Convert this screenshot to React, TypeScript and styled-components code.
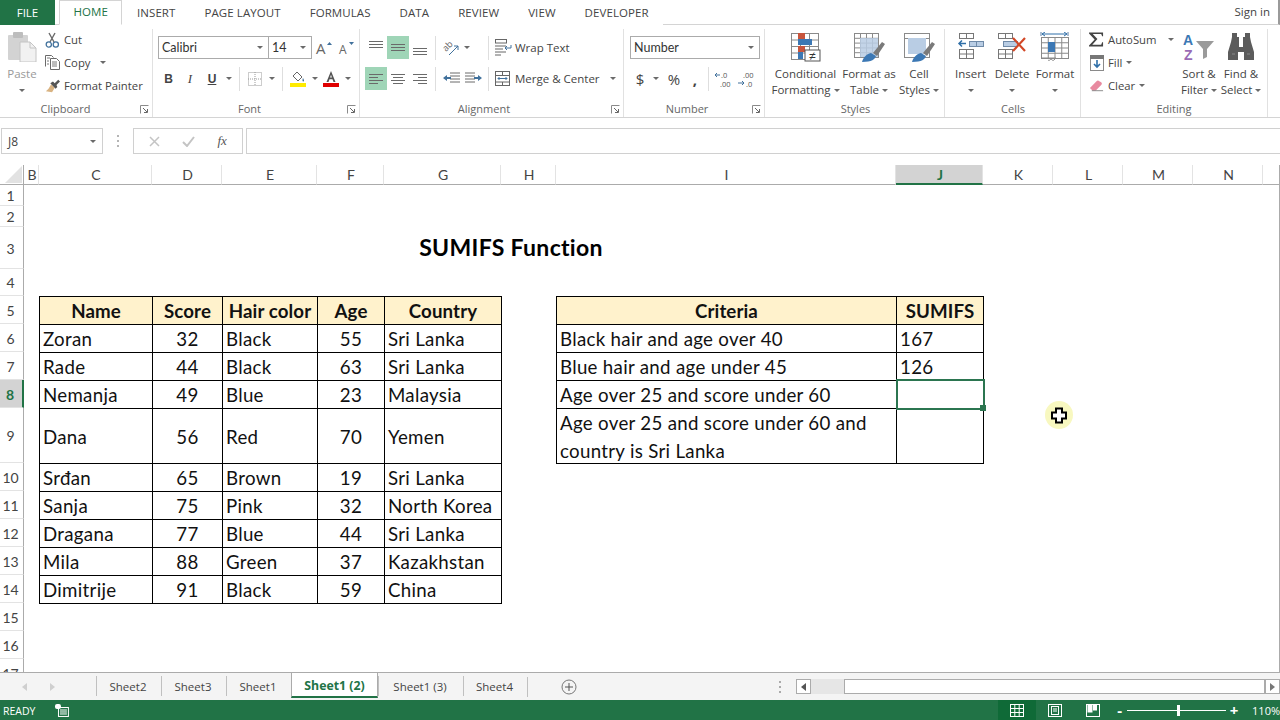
import React from 'react';
import styled, { createGlobalStyle } from 'styled-components';

const GREEN = '#217346';
const UI_FONT = '"Open Sans", "Noto Sans", sans-serif';
const CELL_FONT = 'Lato, "Liberation Sans", sans-serif';

const GlobalStyle = createGlobalStyle`
  html, body { margin: 0; padding: 0; background: #fff; }
  body { font-family: ${UI_FONT}; }
`;

const Window = styled.div`
  width: 1280px;
  height: 720px;
  display: flex;
  flex-direction: column;
  overflow: hidden;
  background: #fff;
  color: #444;
  font-size: 11.5px;
`;

/* ---------- tabs ---------- */
const TabBar = styled.div`
  height: 25px;
  flex: none;
  display: flex;
  box-sizing: border-box;
  border-bottom: 1px solid #d4d4d4;
  border-right: 2px solid #9a9a9a;
`;

const FileTab = styled.div`
  width: 55px;
  height: 25px;
  box-sizing: border-box;
  padding-bottom: 1px;
  margin-right: 4px;
  background: ${GREEN};
  color: #fff;
  font-size: 11.5px;
  display: flex;
  align-items: center;
  justify-content: center;
`;

const RibbonTab = styled.div<{ $active?: boolean }>`
  height: 25px;
  box-sizing: border-box;
  padding: 0 13.5px 2px;
  display: flex;
  align-items: center;
  font-size: 11.5px;
  letter-spacing: 0.08px;
  color: ${p => (p.$active ? GREEN : '#444')};
  background: #fff;
  border: ${p => (p.$active ? '1px solid #d4d4d4' : '1px solid transparent')};
  border-bottom: ${p => (p.$active ? '1px solid #fff' : 'none')};
`;

const SignIn = styled.div`
  margin-left: auto;
  padding: 0 8px 2px 0;
  font-size: 11.5px;
  display: flex;
  align-items: center;
`;

/* ---------- ribbon ---------- */
const Ribbon = styled.div`
  height: 93px;
  flex: none;
  display: flex;
  box-sizing: border-box;
  border-bottom: 1px solid #d4d4d4;
`;

const Group = styled.div<{ $w: number; $pad?: number }>`
  width: ${p => p.$w}px;
  flex: none;
  box-sizing: border-box;
  position: relative;
  display: flex;
  flex-direction: column;
  padding-left: ${p => p.$pad ?? 5}px;
  margin-top: 4px;
  border-right: 1px solid #e1e1e1;
`;

const GroupBody = styled.div`
  flex: 1;
  display: flex;
  min-height: 0;
`;

const GroupLabel = styled.div<{ $pr?: number }>`
  height: 16px;
  line-height: 16px;
  text-align: center;
  color: #666;
  font-size: 11px;
  padding-right: ${p => p.$pr ?? 0}px;
`;

const Launcher = styled.svg`
  position: absolute;
  right: 3px;
  bottom: 3px;
  width: 9px;
  height: 9px;
`;

const Rows = styled.div`
  padding-top: 7px;
  display: flex;
  flex-direction: column;
  gap: 8px;
`;

const Row = styled.div`
  height: 23px;
  display: flex;
  align-items: center;
`;

const Sep = styled.div`
  width: 1px;
  height: 24px;
  margin: 0 4px;
  background: #dedede;
`;

const IconCell = styled.div<{ $w: number; $on?: boolean }>`
  width: ${p => p.$w}px;
  height: 23px;
  flex: none;
  display: flex;
  align-items: center;
  justify-content: center;
  background: ${p => (p.$on ? '#9fd5b7' : 'transparent')};
`;

const Caret = styled.span`
  display: inline-block;
  width: 0;
  height: 0;
  border-left: 3px solid transparent;
  border-right: 3px solid transparent;
  border-top: 3px solid #6a6a6a;
  vertical-align: middle;
`;

const Combo = styled.div<{ $w: number; $joined?: boolean }>`
  width: ${p => p.$w}px;
  height: 23px;
  flex: none;
  box-sizing: border-box;
  border: 1px solid #ababab;
  ${p => (p.$joined ? 'border-left: none;' : '')}
  padding: 0 5px 0 3px;
  background: #fff;
  display: flex;
  align-items: center;
  justify-content: space-between;
  font-family: ${CELL_FONT};
  font-size: 12.5px;
  color: #333;
`;

const SmallColumn = styled.div<{ $w?: number; $left?: number }>`
  ${p => (p.$w ? `width: ${p.$w}px;` : '')}
  margin-left: ${p => p.$left ?? 0}px;
  margin-top: -1px;
  display: flex;
  flex-direction: column;
`;

const SmallAction = styled.div`
  height: 23px;
  display: flex;
  align-items: center;
  gap: 4px;
  white-space: nowrap;
  font-size: 11.3px;
`;

const IconSlot = styled.div`
  width: 15px;
  flex: none;
  display: flex;
  justify-content: center;
`;

const TextButton = styled.div`
  display: flex;
  align-items: center;
  gap: 3px;
  margin-left: 2px;
  white-space: nowrap;
  font-size: 11.5px;
`;

const LargeButton = styled.div<{ $w: number; $muted?: boolean }>`
  width: ${p => p.$w}px;
  flex: none;
  padding-top: 3px;
  display: flex;
  flex-direction: column;
  align-items: center;
  color: ${p => (p.$muted ? '#9a9a9a' : '#444')};
`;

const LargeIcon = styled.div`
  height: 30px;
  margin-bottom: 4px;
  display: flex;
  align-items: flex-start;
  justify-content: center;
`;

const LargeLine = styled.div`
  height: 16px;
  line-height: 16px;
  white-space: nowrap;
  font-size: 11.5px;
  display: flex;
  align-items: center;
  gap: 3px;
`;

const BoldGlyph = styled.span<{ $underline?: boolean }>`
  font-family: "Liberation Sans", sans-serif;
  font-size: 12px;
  font-weight: 700;
  text-decoration: ${p => (p.$underline ? 'underline' : 'none')};
`;

const ItalicGlyph = styled.span`
  font-family: "Liberation Serif", serif;
  font-style: italic;
  font-size: 13px;
`;

const NumberGlyph = styled.span`
  font-size: 15px;
`;

/* ---------- formula bar ---------- */
const FormulaBar = styled.div`
  height: 26px;
  flex: none;
  margin-top: 10px;
  display: flex;
  align-items: stretch;
`;

const NameBox = styled.div`
  width: 102px;
  margin-left: 1px;
  box-sizing: border-box;
  border: 1px solid #d0d0d0;
  padding: 0 6px;
  display: flex;
  align-items: center;
  justify-content: space-between;
  font-size: 12px;
`;

const Grip = styled.div`
  width: 30px;
  display: flex;
  align-items: center;
  justify-content: center;
`;

const FormulaButtons = styled.div`
  width: 110px;
  box-sizing: border-box;
  border: 1px solid #d0d0d0;
  margin-right: 3px;
  display: flex;
  align-items: center;
  justify-content: space-around;
  padding: 0 4px;
`;

const FxLabel = styled.span`
  font-family: "Liberation Serif", serif;
  font-style: italic;
  font-size: 13px;
  color: #555;
`;

const FormulaInput = styled.div`
  flex: 1;
  box-sizing: border-box;
  border: 1px solid #d0d0d0;
  border-right: none;
`;

/* ---------- sheet ---------- */
const SheetArea = styled.div`
  flex: 1;
  min-height: 0;
  margin-top: 11px;
  overflow: hidden;
  position: relative;
  border-right: 1px solid #ababab;
`;

const SheetGrid = styled.div`
  display: grid;
  grid-template-columns: 24px 15px 113px 70px 95px 67px 117px 55px 340px 87px 70px 70px 70px 70px 17px;
  grid-template-rows: 20px 21px 21px 42px 27px 28px 28px 28px 28px 55px 28px 28px 28px 28px 28px 28px 28px 28px;
`;

const Corner = styled.div`
  grid-column: 1;
  grid-row: 1;
  border-right: 1px solid #ababab;
  border-bottom: 1px solid #ababab;
  display: flex;
  align-items: flex-end;
  justify-content: flex-end;
  padding: 0 1px 1px 0;
`;

const ColHead = styled.div<{ $col: number; $on?: boolean }>`
  grid-column: ${p => p.$col};
  grid-row: 1;
  box-sizing: border-box;
  padding-left: 2px;
  display: flex;
  align-items: center;
  justify-content: center;
  font-family: ${CELL_FONT};
  font-size: 14px;
  color: ${p => (p.$on ? GREEN : '#444')};
  font-weight: ${p => (p.$on ? 700 : 400)};
  background: ${p => (p.$on ? '#d3d3d3' : '#fff')};
  border-right: 1px solid #e3e3e3;
  border-bottom: ${p => (p.$on ? `2px solid ${GREEN}` : '1px solid #ababab')};
`;

const RowHead = styled.div<{ $row: number; $on?: boolean }>`
  grid-column: 1;
  grid-row: ${p => p.$row};
  box-sizing: border-box;
  padding: 1px 2px 0 0;
  display: flex;
  align-items: center;
  justify-content: center;
  font-family: ${CELL_FONT};
  font-size: 14px;
  color: ${p => (p.$on ? GREEN : '#444')};
  font-weight: ${p => (p.$on ? 700 : 400)};
  background: ${p => (p.$on ? '#d3d3d3' : '#fff')};
  border-bottom: 1px solid #e3e3e3;
  border-right: ${p => (p.$on ? `2px solid ${GREEN}` : '1px solid #ababab')};
`;

const Title = styled.div`
  grid-column: 3 / 11;
  grid-row: 4;
  padding-bottom: 2px;
  display: flex;
  align-items: center;
  justify-content: center;
  font-family: ${CELL_FONT};
  font-weight: 700;
  font-size: 23px;
  letter-spacing: 0.3px;
  color: #000;
`;

const Cell = styled.div<{ $col: number; $row: number; $head?: boolean; $center?: boolean }>`
  grid-column: ${p => p.$col};
  grid-row: ${p => p.$row};
  position: relative;
  margin: 0 -1px -1px 0;
  box-sizing: border-box;
  border: 1px solid #000;
  padding: 1px 3px 0;
  display: flex;
  align-items: center;
  justify-content: ${p => (p.$center ? 'center' : 'flex-start')};
  font-family: ${CELL_FONT};
  font-size: 18.7px;
  line-height: 28px;
  letter-spacing: ${p => (p.$head ? '0.1px' : '0.3px')};
  font-weight: ${p => (p.$head ? 700 : 400)};
  background: ${p => (p.$head ? '#fff2cc' : '#fff')};
  color: #111;
  white-space: pre-wrap;
`;

const Selection = styled.div`
  position: absolute;
  z-index: 1;
  inset: -2px -2px -2px -1px;
  border: 2px solid #2b7550;
`;

const FillHandle = styled.div`
  position: absolute;
  right: -3px;
  bottom: -3px;
  width: 6px;
  height: 6px;
  background: #2b7550;
`;

const MouseCursor = styled.svg`
  position: absolute;
  left: 1044px;
  top: 235px;
  width: 30px;
  height: 30px;
`;

/* ---------- sheet tabs ---------- */
const TabStrip = styled.div`
  height: 28px;
  flex: none;
  box-sizing: border-box;
  border-top: 1px solid #ababab;
  background: #f4f4f4;
  display: flex;
  align-items: center;
`;

const NavArrows = styled.div`
  width: 96px;
  flex: none;
  padding-left: 22px;
  box-sizing: border-box;
  display: flex;
  gap: 23px;
`;

const SheetTab = styled.div<{ $w: number; $active?: boolean }>`
  width: ${p => p.$w}px;
  flex: none;
  box-sizing: border-box;
  align-self: stretch;
  margin-top: ${p => (p.$active ? '0' : '3px')};
  margin-bottom: ${p => (p.$active ? '2px' : '4px')};
  padding: ${p => (p.$active ? '1px 0 0' : '0 2px 0 0')};
  display: flex;
  align-items: center;
  justify-content: center;
  font-size: ${p => (p.$active ? '12.3px' : '11.5px')};
  color: ${p => (p.$active ? GREEN : '#444')};
  font-weight: ${p => (p.$active ? 700 : 400)};
  background: ${p => (p.$active ? '#fff' : 'transparent')};
  border-left: 1px solid ${p => (p.$active ? '#ababab' : '#c0c0c0')};
  border-right: ${p => (p.$active ? '1px solid #ababab' : 'none')};
  border-bottom: ${p => (p.$active ? `2px solid ${GREEN}` : 'none')};
`;

const TabsEnd = styled.div`
  width: 1px;
  height: 20px;
  background: #c0c0c0;
`;

const AddSheet = styled.svg`
  width: 16px;
  height: 16px;
  margin-left: 33px;
  flex: none;
`;

const HScrollGrip = styled.svg`
  width: 4px;
  height: 12px;
  margin-left: 201px;
  flex: none;
`;

const ScrollButton = styled.div<{ $left?: number }>`
  width: 15px;
  height: 15px;
  flex: none;
  margin-left: ${p => p.$left ?? 0}px;
  box-sizing: border-box;
  border: 1px solid #ababab;
  background: #fff;
  display: flex;
  align-items: center;
  justify-content: center;
`;

const ScrollThumb = styled.div`
  width: 33px;
  height: 15px;
  flex: none;
  background: #e6e6e6;
`;

const ScrollTrack = styled.div`
  flex: 1;
  height: 15px;
  box-sizing: border-box;
  border: 1px solid #ababab;
  background: #fff;
`;

/* ---------- status bar ---------- */
const StatusBar = styled.div`
  height: 20px;
  flex: none;
  background: ${GREEN};
  color: #fff;
  display: flex;
  align-items: center;
  font-size: 10.5px;
`;

const Ready = styled.div`
  box-sizing: border-box;
  padding: 1px 0 0 3px;
  width: 55px;
`;

const ViewButtons = styled.div`
  margin-left: 929px;
  display: flex;
`;

const ViewButton = styled.div<{ $on?: boolean }>`
  width: 38px;
  height: 20px;
  flex: none;
  display: flex;
  align-items: center;
  justify-content: center;
  background: ${p => (p.$on ? '#0f6a37' : 'transparent')};
`;

const ZoomSlider = styled.div`
  width: 100px;
  height: 1px;
  background: #fff;
  position: relative;
  margin: 0 3px 0 2px;
`;

const ZoomKnob = styled.div`
  position: absolute;
  left: 50px;
  top: -5px;
  width: 3px;
  height: 11px;
  background: #fff;
`;

const ZoomSign = styled.div<{ $left?: number }>`
  width: 10px;
  flex: none;
  margin-left: ${p => p.$left ?? 0}px;
  font-size: 15px;
  font-weight: 700;
  line-height: 20px;
  text-align: center;
`;

const ZoomValue = styled.span`
  margin-left: 13px;
  white-space: nowrap;
  font-size: 11px;
`;

/* ---------- icons ---------- */
const LauncherIcon = () => (
  <Launcher viewBox="0 0 9 9">
    <path d="M.5 8.5v-8h8" fill="none" stroke="#8a8a8a" />
    <path d="M3 3l4 4M7.5 4v3.5H4" fill="none" stroke="#666" />
  </Launcher>
);

const AlignLines = ({ lines, y = 0 }: { lines: [number, number][]; y?: number }) => (
  <svg width="16" height="14" viewBox="0 0 16 14">
    {lines.map(([x, w], i) => (
      <rect key={i} x={x} y={y + i * 3} width={w} height="1" fill="#6a6a6a" />
    ))}
  </svg>
);

const PasteIcon = () => (
  <svg width="30" height="30" viewBox="0 0 30 30">
    <rect x="1" y="3" width="20" height="25" rx="1" fill="#d3d3d3" />
    <rect x="6" y="0" width="10" height="6" rx="1" fill="#bdbdbd" />
    <path d="M13 10h10l6 6v14H13z" fill="#f1f1f1" stroke="#c4c4c4" />
    <path d="M23 10v6h6" fill="none" stroke="#c4c4c4" />
  </svg>
);

const CutIcon = () => (
  <svg width="15" height="16" viewBox="0 0 15 16">
    <path d="M10 1L5 10M4 1l5 9" stroke="#6a6a6a" strokeWidth="1.4" fill="none" />
    <circle cx="3.8" cy="12.5" r="2.6" fill="none" stroke="#41719c" strokeWidth="1.3" />
    <circle cx="10.8" cy="12.5" r="2.6" fill="none" stroke="#41719c" strokeWidth="1.3" />
  </svg>
);

const CopyIcon = () => (
  <svg width="15" height="15" viewBox="0 0 15 15" fill="none" stroke="#6a6a6a">
    <path d="M.5 11.5v-11h6l2 2" />
    <path d="M5.5 3.5h6l3 3v8h-9z" fill="#fff" />
    <path d="M2 3h3M2 6h2M2 9h2M7 7h5M7 9h5M7 11h5" stroke="#7a7a7a" />
  </svg>
);

const PainterIcon = () => (
  <svg width="17" height="16" viewBox="0 0 17 16">
    <path d="M7 6l4 4-3 5-7-1 3-3z" fill="#d9b382" />
    <path d="M6 5l3-2 2 2 4-4 2 2-4 4 1 2-2 2z" fill="#555" />
  </svg>
);

const BordersIcon = () => (
  <svg width="14" height="14" viewBox="0 0 14 14" fill="none" stroke="#9a9a9a" strokeDasharray="1 1">
    <rect x=".5" y=".5" width="13" height="13" />
    <path d="M7 0v14M0 7h14" />
  </svg>
);

const FillIcon = () => (
  <svg width="16" height="16" viewBox="0 0 16 16">
    <path d="M7 1l5 5-4 4-5-5z" fill="#fff" stroke="#666" />
    <path d="M13 7c1 2 1.500 3 .5 3.500S12 9 13 7z" fill="#41719c" />
    <rect x="0" y="12" width="16" height="4" fill="#ffeb00" />
  </svg>
);

const FontColorIcon = () => (
  <svg width="16" height="16" viewBox="0 0 16 16">
    <path d="M8 0l4.500 11h-2l-1-2.700h-3L5.500 11h-2zM7.100 6.500h1.800L8 3.800z" fill="#555" />
    <rect x="0" y="12" width="16" height="4" fill="#e00000" />
  </svg>
);

const GrowA = ({ small }: { small?: boolean }) => (
  <svg width="18" height="20" viewBox="0 0 18 20">
    <text x="1" y="16" fontFamily="Open Sans, sans-serif" fontSize={small ? 12 : 15} fill="#666">A</text>
    <path d={small ? 'M11 4h5l-2.500 3z' : 'M12 7h5l-2.500-3z'} fill="#41719c" />
  </svg>
);

const OrientIcon = () => (
  <svg width="17" height="16" viewBox="0 0 17 16" fill="none">
    <text x="0" y="0" transform="translate(3 12) rotate(-45)" fontFamily="Open Sans, sans-serif" fontSize="9" fill="#666">ab</text>
    <path d="M6 15l9-9M15 6h-4M15 6v4" stroke="#41719c" />
  </svg>
);

const IndentIcon = ({ flip }: { flip?: boolean }) => (
  <svg width="17" height="13" viewBox="0 0 17 13" style={flip ? { transform: 'scaleX(-1)' } : undefined}>
    <path d="M7 1h10M7 4h10M7 7h10M7 10h10" stroke="#6a6a6a" />
    <path d="M0 6l4-3v2h4v2H4v2z" fill="#41719c" />
  </svg>
);

const WrapIcon = () => (
  <svg width="17" height="17" viewBox="0 0 17 17" fill="none" stroke="#666">
    <rect x=".5" y=".5" width="11" height="3.500" />
    <path d="M0 7h11M0 10h8M0 13h11M0 16h6" />
    <path d="M16 6v3h-6" stroke="#41719c" />
    <path d="M12 7l-2 2 2 2" stroke="#41719c" />
  </svg>
);

const MergeIcon = () => (
  <svg width="15" height="15" viewBox="0 0 15 15" fill="none" stroke="#666">
    <rect x=".5" y=".5" width="14" height="14" />
    <path d="M0 4.500h15M0 11h15M7.500 0v4M7.500 11v4" />
    <path d="M3 7.500h9M4.500 6L3 7.500 4.500 9M10.500 6L12 7.500 10.500 9" stroke="#41719c" />
  </svg>
);

const DecimalIcon = ({ more }: { more?: boolean }) => (
  <svg width="20" height="20" viewBox="0 0 20 20">
    <text x="7" y="9" fontFamily="Open Sans, sans-serif" fontSize="7.500" fill="#555">{more ? '.00' : '.0'}</text>
    <text x={more ? 10 : 6} y="18" fontFamily="Open Sans, sans-serif" fontSize="7.500" fill="#555">{more ? '.0' : '.00'}</text>
    <path d={more ? 'M2 14h6M6 12l2 2-2 2' : 'M1 6h5M3 4L1 6l2 2'} stroke="#41719c" fill="none" />
  </svg>
);

const Grid4 = ({ x, y, w, h, cols, rows }: { x: number; y: number; w: number; h: number; cols: number; rows: number }) => (
  <g stroke="#8a8a8a" fill="none">
    <rect x={x + 0.5} y={y + 0.5} width={w} height={h} />
    {Array.from({ length: cols - 1 }, (_, i) => (
      <path key={i} d={`M${x + 0.5 + ((i + 1) * w) / cols} ${y}v${h}`} />
    ))}
    {Array.from({ length: rows - 1 }, (_, i) => (
      <path key={i} d={`M${x} ${y + 0.5 + ((i + 1) * h) / rows}h${w}`} />
    ))}
  </g>
);

const ConditionalIcon = () => (
  <svg width="32" height="30" viewBox="0 0 32 30">
    <Grid4 x={1} y={1} w={27} h={26} cols={3} rows={4} />
    <rect x="8" y="1" width="7" height="6" fill="#c8553d" />
    <rect x="8" y="7" width="14" height="6" fill="#3c78b4" />
    <rect x="8" y="14" width="7" height="6" fill="#c8553d" />
    <rect x="8" y="20" width="5" height="7" fill="#3c78b4" />
    <rect x="15" y="18" width="15" height="11" fill="#fff" stroke="#555" />
    <text x="22.500" y="27.500" textAnchor="middle" fontFamily="Liberation Sans, sans-serif" fontSize="12" fill="#333">≠</text>
  </svg>
);

const BrushStroke = () => (
  <g>
    <path d="M20 21L29 10l3 2-8 12z" fill="#7a7a7a" />
    <path d="M9 30c1-4 4-8 9-9l5 3c-1 3-4 6-14 6z" fill="#3c78b4" />
  </g>
);

const FormatTableIcon = () => (
  <svg width="32" height="30" viewBox="0 0 32 30">
    <Grid4 x={1} y={1} w={24} h={24} cols={4} rows={5} />
    <rect x="7" y="6" width="18" height="19" fill="#b9cde4" opacity=".85" />
    <BrushStroke />
  </svg>
);

const CellStylesIcon = () => (
  <svg width="32" height="30" viewBox="0 0 32 30">
    <rect x="1.500" y="1.500" width="25" height="24" fill="none" stroke="#8a8a8a" />
    <path d="M1 6.500h26" stroke="#8a8a8a" />
    <rect x="5" y="6" width="18" height="16" fill="#b9cde4" />
    <BrushStroke />
  </svg>
);

const InsertIcon = () => (
  <svg width="28" height="30" viewBox="0 0 28 30" fill="none" stroke="#777">
    <rect x="2.500" y="1.500" width="14" height="5" />
    <path d="M9.500 1v5" />
    <rect x="2.500" y="17.500" width="14" height="9" />
    <path d="M9.500 17v9M2 22h15" />
    <path d="M2 11.500h7M5 8.500l-3 3 3 3" stroke="#2f6fa8" strokeWidth="1.500" />
    <rect x="12.500" y="9.500" width="14" height="5" fill="#b9cde4" stroke="#6f8aa8" />
    <path d="M19.500 9v5" stroke="#6f8aa8" />
  </svg>
);

const DeleteIcon = () => (
  <svg width="32" height="30" viewBox="0 0 32 30" fill="none" stroke="#777">
    <rect x="2.500" y="1.500" width="14" height="5" />
    <path d="M9.500 1v5" />
    <rect x="2.500" y="17.500" width="14" height="9" />
    <path d="M9.500 17v9M2 22h15" />
    <rect x="7.500" y="9.500" width="14" height="5" fill="#b9cde4" stroke="#6f8aa8" />
    <path d="M17 6l12 13M29 6L17 19" stroke="#d24726" strokeWidth="2.200" />
  </svg>
);

const FormatCellIcon = () => (
  <svg width="30" height="30" viewBox="0 0 30 30" fill="none">
    <path d="M1 0v4M28 0v4" stroke="#5a7fa6" />
    <path d="M2 2h25M5 0L2 2l3 2M24 0l3 2-3 2" stroke="#2f6fa8" />
    <Grid4 x={1} y={5} w={27} h={21} cols={4} rows={4} />
    <rect x="8" y="10" width="7" height="10" fill="#3c78b4" />
    <path d="M1 26h15l-2 2c-1 1-2 0-3-1-1 1-2 2-3 1" stroke="#8a8a8a" />
  </svg>
);

const SigmaIcon = () => (
  <svg width="16" height="15" viewBox="0 0 16 15">
    <path d="M0 0h15v4h-1l-1-2.500H4L9 7l-5.500 6H13l1-2.500h1V15H0v-1l6-6.500L0 1z" fill="#444" />
  </svg>
);

const FillDownIcon = () => (
  <svg width="14" height="16" viewBox="0 0 14 16">
    <rect x=".5" y=".5" width="13" height="15" fill="#fff" stroke="#8a8a8a" />
    <rect x="0" y="0" width="14" height="4" fill="#777" />
    <path d="M7 5v7M4 9l3 3 3-3" stroke="#2f6fa8" strokeWidth="1.600" fill="none" />
  </svg>
);

const EraserIcon = () => (
  <svg width="16" height="14" viewBox="0 0 16 14">
    <path d="M1 9l7-7c1-1 2-1 3 0l2 1c1 1 1 2 0 3l-6 6H4z" fill="#e88aa0" />
    <path d="M3 12h12" stroke="#888" />
  </svg>
);

const SortIcon = () => (
  <svg width="32" height="30" viewBox="0 0 32 30">
    <text x="0" y="13" fontFamily="Liberation Sans, sans-serif" fontWeight="700" fontSize="14" fill="#3c78b4">A</text>
    <text x="1" y="28" fontFamily="Liberation Sans, sans-serif" fontWeight="700" fontSize="14" fill="#9a6bb5">Z</text>
    <path d="M13 9h18l-7 8v8l-4 2V17z" fill="#9a9a9a" />
  </svg>
);

const BinocularsIcon = () => (
  <svg width="28" height="30" viewBox="0 0 28 30">
    <path d="M5 1h5v4h2v10h4V5h2V1h5v4l1 5 3 10v8H17v-8h-6v8H1v-8l3-10 1-5z" fill="#5c5c5c" />
    <path d="M5 22h3M20 22h3" stroke="#888" />
  </svg>
);

const CrossIcon = () => (
  <svg width="11" height="11" viewBox="0 0 11 11"><path d="M1 1l9 9M10 1l-9 9" stroke="#c4c4c4" strokeWidth="1.500" /></svg>
);

const CheckIcon = () => (
  <svg width="13" height="11" viewBox="0 0 13 11"><path d="M1 6l4 4 7-9" stroke="#c4c4c4" strokeWidth="2" fill="none" /></svg>
);

const Arrow = ({ left, color }: { left?: boolean; color: string }) => (
  <svg width="5" height="8" viewBox="0 0 5 8"><path d={left ? 'M5 0v8L0 4z' : 'M0 0v8l5-4z'} fill={color} /></svg>
);

const GripDots = ({ color }: { color: string }) => (
  <svg width="4" height="12" viewBox="0 0 4 12" fill={color}>
    <rect x="1" y="0" width="2" height="2" />
    <rect x="1" y="5" width="2" height="2" />
    <rect x="1" y="10" width="2" height="2" />
  </svg>
);

/* ---------- data ---------- */
const COLUMNS = ['B', 'C', 'D', 'E', 'F', 'G', 'H', 'I', 'J', 'K', 'L', 'M', 'N'];

const ROW_LABELS = Array.from({ length: 17 }, (_, i) => i + 1);

const PEOPLE: [string, number, string, number, string][] = [
  ['Zoran', 32, 'Black', 55, 'Sri Lanka'],
  ['Rade', 44, 'Black', 63, 'Sri Lanka'],
  ['Nemanja', 49, 'Blue', 23, 'Malaysia'],
  ['Dana', 56, 'Red', 70, 'Yemen'],
  ['Srđan', 65, 'Brown', 19, 'Sri Lanka'],
  ['Sanja', 75, 'Pink', 32, 'North Korea'],
  ['Dragana', 77, 'Blue', 44, 'Sri Lanka'],
  ['Mila', 88, 'Green', 37, 'Kazakhstan'],
  ['Dimitrije', 91, 'Black', 59, 'China'],
];

const HEADERS = ['Name', 'Score', 'Hair color', 'Age', 'Country'];

const CRITERIA: [string, string][] = [
  ['Black hair and age over 40', '167'],
  ['Blue hair and age under 45', '126'],
  ['Age over 25 and score under 60', ''],
  ['Age over 25 and score under 60 and\ncountry is Sri Lanka', ''],
];

const SHEETS: { name: string; w: number; active?: boolean }[] = [
  { name: 'Sheet2', w: 65 },
  { name: 'Sheet3', w: 65 },
  { name: 'Sheet1', w: 65 },
  { name: 'Sheet1 (2)', w: 87, active: true },
  { name: 'Sheet1 (3)', w: 85 },
  { name: 'Sheet4', w: 64 },
];

const RIBBON_TABS = ['INSERT', 'PAGE LAYOUT', 'FORMULAS', 'DATA', 'REVIEW', 'VIEW', 'DEVELOPER'];

const App: React.FC = () => (
  <Window>
    <GlobalStyle />
    <TabBar>
      <FileTab>FILE</FileTab>
      <RibbonTab $active>HOME</RibbonTab>
      {RIBBON_TABS.map(t => (
        <RibbonTab key={t}>{t}</RibbonTab>
      ))}
      <SignIn>Sign in</SignIn>
    </TabBar>

    <Ribbon>
      <Group $w={153} $pad={3}>
        <GroupBody>
          <LargeButton $w={38} $muted>
            <LargeIcon><PasteIcon /></LargeIcon>
            <LargeLine>Paste</LargeLine>
            <LargeLine><Caret /></LargeLine>
          </LargeButton>
          <SmallColumn $left={4}>
            <SmallAction><IconSlot><CutIcon /></IconSlot>Cut</SmallAction>
            <SmallAction><IconSlot><CopyIcon /></IconSlot>Copy<Caret style={{ marginLeft: 6 }} /></SmallAction>
            <SmallAction><IconSlot><PainterIcon /></IconSlot>Format Painter</SmallAction>
          </SmallColumn>
        </GroupBody>
        <GroupLabel $pr={24}>Clipboard</GroupLabel>
        <LauncherIcon />
      </Group>

      <Group $w={207}>
        <GroupBody>
          <Rows>
            <Row>
              <Combo $w={111}>Calibri<Caret /></Combo>
              <Combo $w={43} $joined>14<Caret /></Combo>
              <IconCell $w={23}><GrowA /></IconCell>
              <IconCell $w={23}><GrowA small /></IconCell>
            </Row>
            <Row>
              <IconCell $w={21}><BoldGlyph>B</BoldGlyph></IconCell>
              <IconCell $w={22}><ItalicGlyph>I</ItalicGlyph></IconCell>
              <IconCell $w={22}><BoldGlyph $underline>U</BoldGlyph></IconCell>
              <IconCell $w={12}><Caret /></IconCell>
              <Sep />
              <IconCell $w={22}><BordersIcon /></IconCell>
              <IconCell $w={12}><Caret /></IconCell>
              <Sep />
              <IconCell $w={22}><FillIcon /></IconCell>
              <IconCell $w={11}><Caret /></IconCell>
              <IconCell $w={22}><FontColorIcon /></IconCell>
              <IconCell $w={11}><Caret /></IconCell>
            </Row>
          </Rows>
        </GroupBody>
        <GroupLabel $pr={18}>Font</GroupLabel>
        <LauncherIcon />
      </Group>

      <Group $w={264}>
        <GroupBody>
          <Rows>
            <Row>
              <IconCell $w={22}><AlignLines lines={[[1, 14], [1, 14], [1, 14]]} y={0} /></IconCell>
              <IconCell $w={22} $on><AlignLines lines={[[1, 14], [1, 14], [1, 14]]} y={3} /></IconCell>
              <IconCell $w={22}><AlignLines lines={[[1, 14], [1, 14], [1, 14]]} y={7} /></IconCell>
              <Sep />
              <IconCell $w={22}><OrientIcon /></IconCell>
              <IconCell $w={10}><Caret /></IconCell>
              <IconCell $w={12} />
              <Sep />
              <TextButton><WrapIcon />Wrap Text</TextButton>
            </Row>
            <Row>
              <IconCell $w={22} $on><AlignLines lines={[[1, 14], [1, 9], [1, 14], [1, 9]]} y={2} /></IconCell>
              <IconCell $w={22}><AlignLines lines={[[1, 14], [3, 10], [1, 14], [3, 10]]} y={2} /></IconCell>
              <IconCell $w={22}><AlignLines lines={[[1, 14], [6, 9], [1, 14], [6, 9]]} y={2} /></IconCell>
              <Sep />
              <IconCell $w={22}><IndentIcon /></IconCell>
              <IconCell $w={22}><IndentIcon flip /></IconCell>
              <Sep />
              <TextButton>
                <MergeIcon />
                <span style={{ marginLeft: 2 }}>Merge &amp; Center</span>
                <Caret style={{ marginLeft: 7 }} />
              </TextButton>
            </Row>
          </Rows>
        </GroupBody>
        <GroupLabel $pr={20}>Alignment</GroupLabel>
        <LauncherIcon />
      </Group>

      <Group $w={141} $pad={6}>
        <GroupBody>
          <Rows>
            <Row>
              <Combo $w={130}>Number<Caret /></Combo>
            </Row>
            <Row>
              <IconCell $w={20}><NumberGlyph>$</NumberGlyph></IconCell>
              <IconCell $w={12}><Caret /></IconCell>
              <IconCell $w={24}><NumberGlyph>%</NumberGlyph></IconCell>
              <IconCell $w={18}><NumberGlyph><b>,</b></NumberGlyph></IconCell>
              <Sep />
              <IconCell $w={22}><DecimalIcon /></IconCell>
              <IconCell $w={22}><DecimalIcon more /></IconCell>
            </Row>
          </Rows>
        </GroupBody>
        <GroupLabel $pr={20}>Number</GroupLabel>
        <LauncherIcon />
      </Group>

      <Group $w={180} $pad={6}>
        <GroupBody>
          <LargeButton $w={69}>
            <LargeIcon><ConditionalIcon /></LargeIcon>
            <LargeLine>Conditional</LargeLine>
            <LargeLine>Formatting<Caret /></LargeLine>
          </LargeButton>
          <LargeButton $w={58}>
            <LargeIcon><FormatTableIcon /></LargeIcon>
            <LargeLine>Format as</LargeLine>
            <LargeLine>Table<Caret /></LargeLine>
          </LargeButton>
          <LargeButton $w={42}>
            <LargeIcon><CellStylesIcon /></LargeIcon>
            <LargeLine>Cell</LargeLine>
            <LargeLine>Styles<Caret /></LargeLine>
          </LargeButton>
        </GroupBody>
        <GroupLabel $pr={4}>Styles</GroupLabel>
      </Group>

      <Group $w={136}>
        <GroupBody>
          <LargeButton $w={41}>
            <LargeIcon><InsertIcon /></LargeIcon>
            <LargeLine>Insert</LargeLine>
            <LargeLine><Caret /></LargeLine>
          </LargeButton>
          <LargeButton $w={42}>
            <LargeIcon><DeleteIcon /></LargeIcon>
            <LargeLine>Delete</LargeLine>
            <LargeLine><Caret /></LargeLine>
          </LargeButton>
          <LargeButton $w={44}>
            <LargeIcon><FormatCellIcon /></LargeIcon>
            <LargeLine>Format</LargeLine>
            <LargeLine><Caret /></LargeLine>
          </LargeButton>
        </GroupBody>
        <GroupLabel $pr={4}>Cells</GroupLabel>
      </Group>

      <Group $w={187} $pad={8}>
        <GroupBody>
          <SmallColumn $w={87}>
            <SmallAction><IconSlot><SigmaIcon /></IconSlot>AutoSum<Caret style={{ marginLeft: 8 }} /></SmallAction>
            <SmallAction><IconSlot><FillDownIcon /></IconSlot>Fill<Caret /></SmallAction>
            <SmallAction><IconSlot><EraserIcon /></IconSlot>Clear<Caret /></SmallAction>
          </SmallColumn>
          <LargeButton $w={46}>
            <LargeIcon><SortIcon /></LargeIcon>
            <LargeLine>Sort &amp;</LargeLine>
            <LargeLine>Filter<Caret /></LargeLine>
          </LargeButton>
          <LargeButton $w={38}>
            <LargeIcon><BinocularsIcon /></LargeIcon>
            <LargeLine>Find &amp;</LargeLine>
            <LargeLine>Select<Caret /></LargeLine>
          </LargeButton>
        </GroupBody>
        <GroupLabel $pr={8}>Editing</GroupLabel>
      </Group>
    </Ribbon>

    <FormulaBar>
      <NameBox>J8<Caret /></NameBox>
      <Grip><GripDots color="#b5b5b5" /></Grip>
      <FormulaButtons>
        <CrossIcon />
        <CheckIcon />
        <FxLabel>fx</FxLabel>
      </FormulaButtons>
      <FormulaInput />
    </FormulaBar>

    <SheetArea>
      <SheetGrid>
        <Corner>
          <svg width="17" height="17" viewBox="0 0 17 17"><path d="M17 0v17H0z" fill="#e2e2e2" /></svg>
        </Corner>
        {COLUMNS.map((c, i) => (
          <ColHead key={c} $col={i + 2} $on={c === 'J'}>{c}</ColHead>
        ))}
        <ColHead $col={15} />
        {ROW_LABELS.map(n => (
          <RowHead key={n} $row={n + 1} $on={n === 8}>{n}</RowHead>
        ))}

        <Title>SUMIFS Function</Title>

        {HEADERS.map((h, i) => (
          <Cell key={h} $col={i + 3} $row={6} $head $center>{h}</Cell>
        ))}
        {PEOPLE.map((p, r) =>
          p.map((v, c) => (
            <Cell key={`${r}-${c}`} $col={c + 3} $row={r + 7} $center={typeof v === 'number'}>{v}</Cell>
          )),
        )}

        <Cell $col={9} $row={6} $head $center>Criteria</Cell>
        <Cell $col={10} $row={6} $head $center>SUMIFS</Cell>
        {CRITERIA.map(([text, result], i) => (
          <React.Fragment key={text}>
            <Cell $col={9} $row={i + 7}>{text}</Cell>
            <Cell $col={10} $row={i + 7}>
              {result}
              {i === 2 && <Selection><FillHandle /></Selection>}
            </Cell>
          </React.Fragment>
        ))}
      </SheetGrid>

      <MouseCursor viewBox="0 0 30 30">
        <circle cx="15" cy="15" r="14" fill="#f8f8c0" />
        <path d="M12 8.500h6v4h4v6h-4v4h-6v-4H8v-6h4z" fill="#fff" stroke="#000" strokeWidth="2" />
      </MouseCursor>
    </SheetArea>

    <TabStrip>
      <NavArrows>
        <Arrow left color="#cfcfcf" />
        <Arrow color="#cfcfcf" />
      </NavArrows>
      {SHEETS.map(s => (
        <SheetTab key={s.name} $w={s.w} $active={s.active}>{s.name}</SheetTab>
      ))}
      <TabsEnd />
      <AddSheet viewBox="0 0 16 16">
        <circle cx="8" cy="8" r="7" fill="none" stroke="#777" />
        <path d="M8 4v8M4 8h8" stroke="#555" />
      </AddSheet>
      <HScrollGrip viewBox="0 0 4 12">
        <g fill="#aaa">
          <rect x="1" y="0" width="2" height="2" />
          <rect x="1" y="5" width="2" height="2" />
          <rect x="1" y="10" width="2" height="2" />
        </g>
      </HScrollGrip>
      <ScrollButton $left={14}><Arrow left color="#555" /></ScrollButton>
      <ScrollThumb />
      <ScrollTrack />
      <ScrollButton><Arrow color="#777" /></ScrollButton>
    </TabStrip>

    <StatusBar>
      <Ready>READY</Ready>
      <svg width="14" height="13" viewBox="0 0 14 13">
        <rect x="3.500" y="3.500" width="10" height="9" fill="none" stroke="#fff" />
        <rect x="0" y="0" width="6" height="5" rx="2" fill="#fff" />
        <path d="M5 6h7M5 8h7M5 10h7" stroke="#fff" />
      </svg>
      <ViewButtons>
        <ViewButton $on>
          <svg width="14" height="13" viewBox="0 0 14 13" fill="none" stroke="#fff">
            <rect x=".5" y=".5" width="13" height="12" />
            <path d="M4.800 0v13M9.200 0v13M0 4.500h14M0 8.500h14" />
          </svg>
        </ViewButton>
        <ViewButton>
          <svg width="14" height="13" viewBox="0 0 14 13" fill="none" stroke="#fff">
            <rect x=".5" y=".5" width="13" height="12" />
            <rect x="3.500" y="2.500" width="7" height="8" />
            <path d="M5 5h4M5 7h4" />
          </svg>
        </ViewButton>
        <ViewButton>
          <svg width="14" height="13" viewBox="0 0 14 13" fill="none" stroke="#fff">
            <rect x=".5" y=".5" width="13" height="12" />
            <rect x="2" y="1" width="4" height="7" fill="#fff" />
            <rect x="7.500" y="1" width="3" height="5" fill="#fff" />
          </svg>
        </ViewButton>
      </ViewButtons>
      <ZoomSign $left={3}>-</ZoomSign>
      <ZoomSlider><ZoomKnob /></ZoomSlider>
      <ZoomSign>+</ZoomSign>
      <ZoomValue>110%</ZoomValue>
    </StatusBar>
  </Window>
);

export default App;
